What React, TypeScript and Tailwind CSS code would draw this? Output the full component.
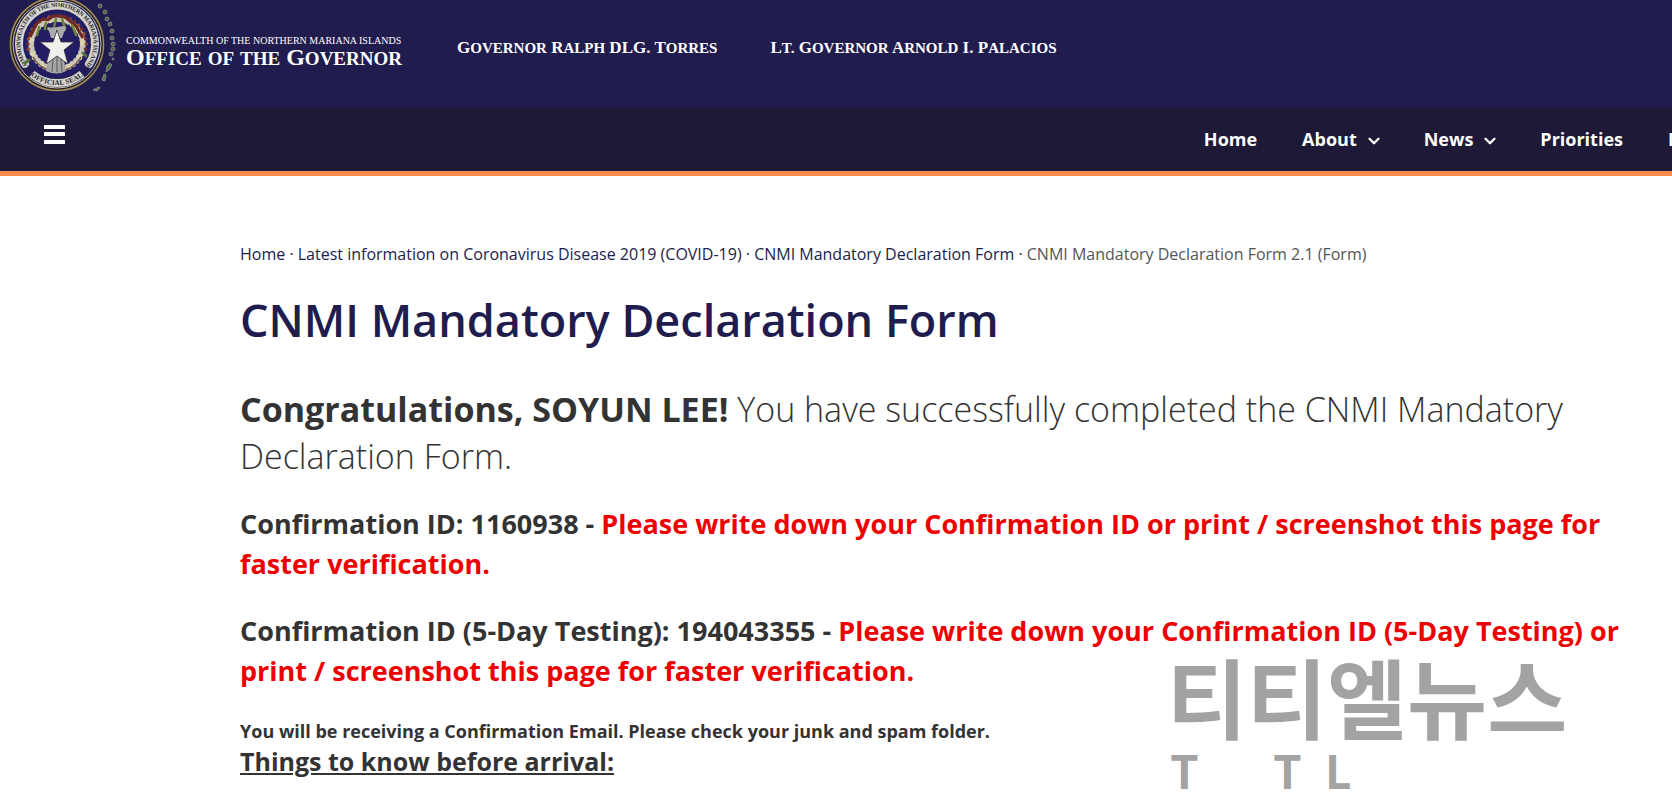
import React from 'react';
import { ChevronDown } from 'lucide-react';

const navItems = [
  { label: 'Home', menu: false },
  { label: 'About', menu: true },
  { label: 'News', menu: true },
  { label: 'Priorities', menu: false },
];

const crumbs = [
  'Home',
  'Latest information on Coronavirus Disease 2019 (COVID-19)',
  'CNMI Mandatory Declaration Form',
];

// beads of the mwar garland, placed around the star
const beads = Array.from({ length: 34 }, (_, i) => {
  const a = (i / 34) * Math.PI * 2;
  return { x: 58 + Math.cos(a) * 26, y: 45 + Math.sin(a) * 25, top: Math.sin(a) < 0.2 };
});

const islands = [
  [101, 7, 2], [106, 13, 2], [108, 20, 2], [111, 25, 2], [113, 32, 2], [113, 39, 2],
  [114, 45, 2], [114, 50, 2], [112, 55, 2], [114, 60, 1],
];

function Seal() {
  return (
    <svg viewBox="1 1 120 96" className="h-24 w-[120px] shrink-0" role="img" aria-label="Official seal">
      <defs>
        <path id="ring-top" d="M 29 69 A 38 38 0 1 1 87 69" />
        <path id="ring-bottom" d="M 32 75 A 40.5 40.5 0 0 0 84 75" />
      </defs>
      <circle cx="58" cy="45" r="46.5" fill="#24211f" stroke="#a48d5c" strokeWidth="1.5" />
      <circle cx="58" cy="45" r="44" fill="#231d5b" stroke="#c9c0a6" strokeWidth="1" />
      <path d="M 26 65 A 38 38 0 1 1 90 65" fill="none" stroke="#d3d2cc" strokeWidth="8" strokeLinecap="round" />
      <path d="M 33 75 A 39 39 0 0 0 83 75" fill="none" stroke="#d3d2cc" strokeWidth="8" />
      <text fontSize="6" fontWeight="700" fill="#1c1b26" fontFamily="Liberation Serif, serif">
        <textPath href="#ring-top" startOffset="50%" textAnchor="middle" dominantBaseline="middle">
          COMMONWEALTH OF THE NORTHERN MARIANA ISLANDS
        </textPath>
      </text>
      <circle cx="58" cy="45" r="33" fill="#231d63" />
      {beads.map((b, i) => (
        <g key={i}>
          <circle cx={b.x} cy={b.y} r="3.2" fill={i % 3 === 0 ? '#d9d2b4' : '#c9c4b8'} />
          {b.top && <circle cx={58 + (b.x - 58) * 1.12} cy={45 + (b.y - 45) * 1.12} r="1.8" fill={i % 2 ? '#6f2b26' : '#8f4a35'} />}
        </g>
      ))}
      <circle cx="58" cy="45" r="21.5" fill="#231d63" />
      <path d="M34 58Q40 69 51 71M82 58Q76 69 65 71" fill="none" stroke="#75533a" strokeWidth="1.5" />
      <path d="M31 38l4-8 3-6 6-4 5 1 5-4 7 0 5 1 5 4 6 5 4 7 3 5" fill="none" stroke="#6e2925" strokeWidth="3" />
      <path d="M40 28l-2 8M47 24l-1 6M57 20l-2 8M63 20l3 9M73 26l4 10" stroke="#71813a" strokeWidth="2.5" strokeLinecap="round" />
      <path d="M30 61l-4 3M84 54l3 3" stroke="#54713e" strokeWidth="3" strokeLinecap="round" />
      <path d="M50 32q-3-2-1-4 4 1 9 0t8-1q2 4-1 6l-2 6H52z" fill="#aaa9ac" />
      <path d="M50 57l-3 15q11 5 20 0l-3-16z" fill="#a5a4a2" />
      <path d="M54 60l-1 13M58 58v15M62 60l1 13" stroke="#5d5b5c" strokeWidth="1" />
      <path d="M58 31l4 12h13l-10 8 4 14-11-8-11 8 4-14-10-8h13z" fill="#f1efeb" stroke="#35313a" strokeWidth="0.8" />
      <text fontSize="7" fontWeight="700" fill="#1c1b26" fontFamily="Liberation Serif, serif">
        <textPath href="#ring-bottom" startOffset="50%" textAnchor="middle" dominantBaseline="middle">
          OFFICIAL SEAL
        </textPath>
      </text>
      {islands.map(([x, y, r], i) => (
        <circle key={i} cx={x} cy={y} r={r} fill="#4c6549" stroke="#918f94" strokeWidth="0.8" />
      ))}
      <g fill="#4d7048" stroke="#918f94" strokeWidth="0.8">
        <path d="M111 64l2 2-3 5-3 2 1-6z" />
        <path d="M105 75l2 1-1 6-3-1z" />
        <path d="M94 91l6-3 1 1-3 3z" />
      </g>
    </svg>
  );
}

function Caps({ text, size }: { text: string; size: 'lg' | 'sm' }) {
  // the first letter of each word is a full capital, the rest are smaller ones
  const small = size === 'lg' ? 'text-[19px]' : 'text-[15px]';
  return (
    <>
      {text.split(' ').map((word, i) => (
        <React.Fragment key={i}>
          {i > 0 && ' '}
          {word === 'DLG.' || word === 'I.' ? (
            word
          ) : word === 'of' || word === 'the' ? (
            <span className={small}>{word.toUpperCase()}</span>
          ) : (
            <>
              {word[0]}
              <span className={small}>{word.slice(1).toUpperCase()}</span>
            </>
          )}
        </React.Fragment>
      ))}
    </>
  );
}

function Header() {
  return (
    <header>
      <div className="flex h-[108px] items-start overflow-hidden bg-[#211c4e] font-['Liberation_Serif',serif] font-bold whitespace-nowrap text-white">
        <Seal />
        <div className="ml-[6px] w-[331px] shrink-0 pt-[34px]">
          <p className="text-[10px] leading-[14px] font-normal">COMMONWEALTH OF THE NORTHERN MARIANA ISLANDS</p>
          <p className="text-[24px] leading-[18px]">
            <Caps text="Office of the Governor" size="lg" />
          </p>
        </div>
        <div className="flex gap-[53px] pt-[38px] text-[17px] leading-5">
          <p>
            <Caps text="Governor Ralph DLG. Torres" size="sm" />
          </p>
          <p>
            <Caps text="Lt. Governor Arnold I. Palacios" size="sm" />
          </p>
        </div>
      </div>
      <div className="flex h-[68px] items-start justify-between overflow-hidden border-b-[5px] border-[#fb8e4f] bg-[#1d1936] text-white">
        <button type="button" aria-label="Open menu" className="mt-[17px] ml-11">
          <svg viewBox="0 0 21 19" className="h-[19px] w-[21px]" fill="currentColor">
            <rect width="21" height="4" rx="0.5" />
            <rect y="7" width="21" height="4" rx="0.5" />
            <rect y="15" width="21" height="4" rx="0.5" />
          </svg>
        </button>
        <nav className="flex gap-[45px] pt-[17px] text-[18px] leading-7 font-bold whitespace-nowrap">
          {navItems.map((item) => (
            <a key={item.label} href="#" className="flex items-center gap-2">
              {item.label}
              {item.menu && <ChevronDown className="mt-1 -mr-1 size-[18px]" strokeWidth={3} />}
            </a>
          ))}
          <a href="#" className="w-[4px] overflow-hidden">
            Media
          </a>
        </nav>
      </div>
    </header>
  );
}

export default function App() {
  return (
    <div className="relative h-screen overflow-hidden bg-white font-['Open_Sans',sans-serif] text-[#333333]">
      <Header />
      <main className="pt-[66px] pr-8 pl-60">
        <nav aria-label="Breadcrumb" className="text-[16px] leading-6 font-medium text-[#211c4e]">
          {crumbs.map((crumb) => (
            <React.Fragment key={crumb}>
              <a href="#">{crumb}</a>
              {' · '}
            </React.Fragment>
          ))}
          <span className="text-[#555555]">CNMI Mandatory Declaration Form 2.1 (Form)</span>
        </nav>
        <h1 className="mt-6 text-[45px] leading-[60px] font-semibold text-[#211c4e]">CNMI Mandatory Declaration Form</h1>
        <p className="mt-9 text-[34px] leading-[47px] font-light">
          <strong className="font-bold">Congratulations, SOYUN LEE!</strong> You have successfully completed the CNMI
          Mandatory Declaration Form.
        </p>
        <p className="mt-6 text-[27px] leading-10 font-bold">
          Confirmation ID: 1160938 -{' '}
          <span className="text-[#ee0000]">
            Please write down your Confirmation ID or print / screenshot this page for faster verification.
          </span>
        </p>
        <p className="mt-[27px] text-[27px] leading-10 font-bold">
          Confirmation ID (5-Day Testing): 194043355 -{' '}
          <span className="text-[#ee0000]">
            Please write down your Confirmation ID (5-Day Testing) or print / screenshot this page for faster
            verification.
          </span>
        </p>
        <p className="mt-[26px] text-[18px] leading-7 font-bold">
          You will be receiving a Confirmation Email. Please check your junk and spam folder.
        </p>
        <h2 className="text-[25px] leading-8 font-bold underline">Things to know before arrival:</h2>
      </main>

      <div className="absolute right-[104px] bottom-1 w-[401px] font-['Noto_Sans_CJK_KR',sans-serif] font-bold text-[#a3a3a3]">
        <p className="mb-1 text-[87px] leading-[90px] whitespace-nowrap">티티엘뉴스</p>
        <p className="flex pl-[3px] text-[46px] leading-[50px]">
          <span className="w-[103px]">T</span>
          <span className="w-[52px]">T</span>
          <span>L</span>
        </p>
      </div>
    </div>
  );
}
